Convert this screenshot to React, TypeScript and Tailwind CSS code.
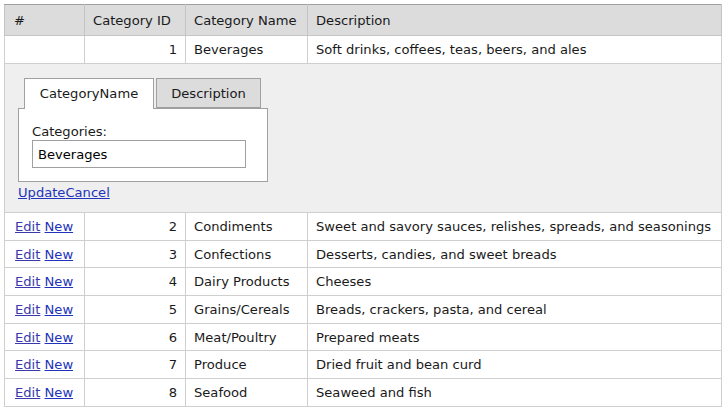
import React from "react";

const rows = [
  [2, "Condiments", "Sweet and savory sauces, relishes, spreads, and seasonings"],
  [3, "Confections", "Desserts, candies, and sweet breads"],
  [4, "Dairy Products", "Cheeses"],
  [5, "Grains/Cereals", "Breads, crackers, pasta, and cereal"],
  [6, "Meat/Poultry", "Prepared meats"],
  [7, "Produce", "Dried fruit and bean curd"],
  [8, "Seafood", "Seaweed and fish"],
] as const;

const FONT = '"DejaVu Sans", Verdana, sans-serif';

export default function App() {
  return (
    <div
      className="w-[725px] h-[411px] bg-white pl-[4px] pt-[4px] text-[13.1px] text-[#1a1a1a]"
      style={{ fontFamily: FONT }}
    >
      <table className="table-fixed border-collapse w-[718px] border border-[#a0a0a0]">
        <colgroup>
          <col className="w-[80px]" />
          <col className="w-[101px]" />
          <col className="w-[122px]" />
          <col />
        </colgroup>
        <thead>
          <tr className="h-[31px] bg-[#dcdcdc]">
            <th className="border border-[#c4c4c4] border-t-[#a0a0a0] text-left font-normal pl-[9px] pt-[1px]">#</th>
            <th className="border border-[#c4c4c4] border-t-[#a0a0a0] text-left font-normal pl-[8px] pt-[1px]">Category ID</th>
            <th className="border border-[#c4c4c4] border-t-[#a0a0a0] text-left font-normal pl-[8px] pt-[1px]">Category Name</th>
            <th className="border border-[#c4c4c4] border-t-[#a0a0a0] text-left font-normal pl-[8px] pt-[1px]">Description</th>
          </tr>
        </thead>
        <tbody>
          <tr className="h-[28px]">
            <td className="border border-[#cfcfcf]"></td>
            <td className="border border-[#cfcfcf] text-right pr-[8px] pt-[1px]">1</td>
            <td className="border border-[#cfcfcf] pl-[8px] pt-[1px]">Beverages</td>
            <td className="border border-[#cfcfcf] pl-[8px] pt-[1px]">Soft drinks, coffees, teas, beers, and ales</td>
          </tr>
          <tr className="h-[149px] bg-[#efefef]">
            <td colSpan={4} className="border border-[#cfcfcf] align-top pl-[13px] pt-[14px]">
              <div className="flex flex-col items-start">
                <div className="flex gap-[2px] pl-[6px] relative z-10">
                  <div className="w-[130px] h-[31px] bg-white border border-[#a0a0a0] border-b-0 flex items-center justify-center">
                    CategoryName
                  </div>
                  <div className="w-[105px] h-[30px] bg-[#dcdcdc] border border-[#a0a0a0] flex items-center justify-center pt-[1px]">
                    Description
                  </div>
                </div>
                <div className="w-[250px] h-[74px] -mt-[1px] bg-white border border-[#a0a0a0] pl-[13px] pt-[14px] flex flex-col">
                  <div className="leading-[17px]">Categories:</div>
                  <input
                    readOnly
                    value="Beverages"
                    className="w-[214px] h-[28px] border border-[#a0a0a0] px-[5px] text-[13.1px] outline-none bg-white text-black"
                    style={{ fontFamily: FONT }}
                  />
                </div>
                <div className="mt-[2px] leading-[17px]">
                  <a href="#" className="text-[#2233bb] underline">Update</a>
                  <a href="#" className="text-[#2233bb] underline">Cancel</a>
                </div>
              </div>
            </td>
          </tr>
          {rows.map(([id, name, desc], i) => (
            <tr key={id} className={i === 6 ? "h-[28px]" : "h-[27.7px]"}>
              <td className="border border-[#cfcfcf] pl-[10px] pt-[1px]">
                <a href="#" className="text-[#3a38ad] underline">Edit</a>{" "}
                <a href="#" className="text-[#2233bb] underline">New</a>
              </td>
              <td className="border border-[#cfcfcf] text-right pr-[8px] pt-[1px]">{id}</td>
              <td className="border border-[#cfcfcf] pl-[8px] pt-[1px]">{name}</td>
              <td className="border border-[#cfcfcf] pl-[8px] pt-[1px] whitespace-nowrap">{desc}</td>
            </tr>
          ))}
        </tbody>
      </table>
    </div>
  );
}
